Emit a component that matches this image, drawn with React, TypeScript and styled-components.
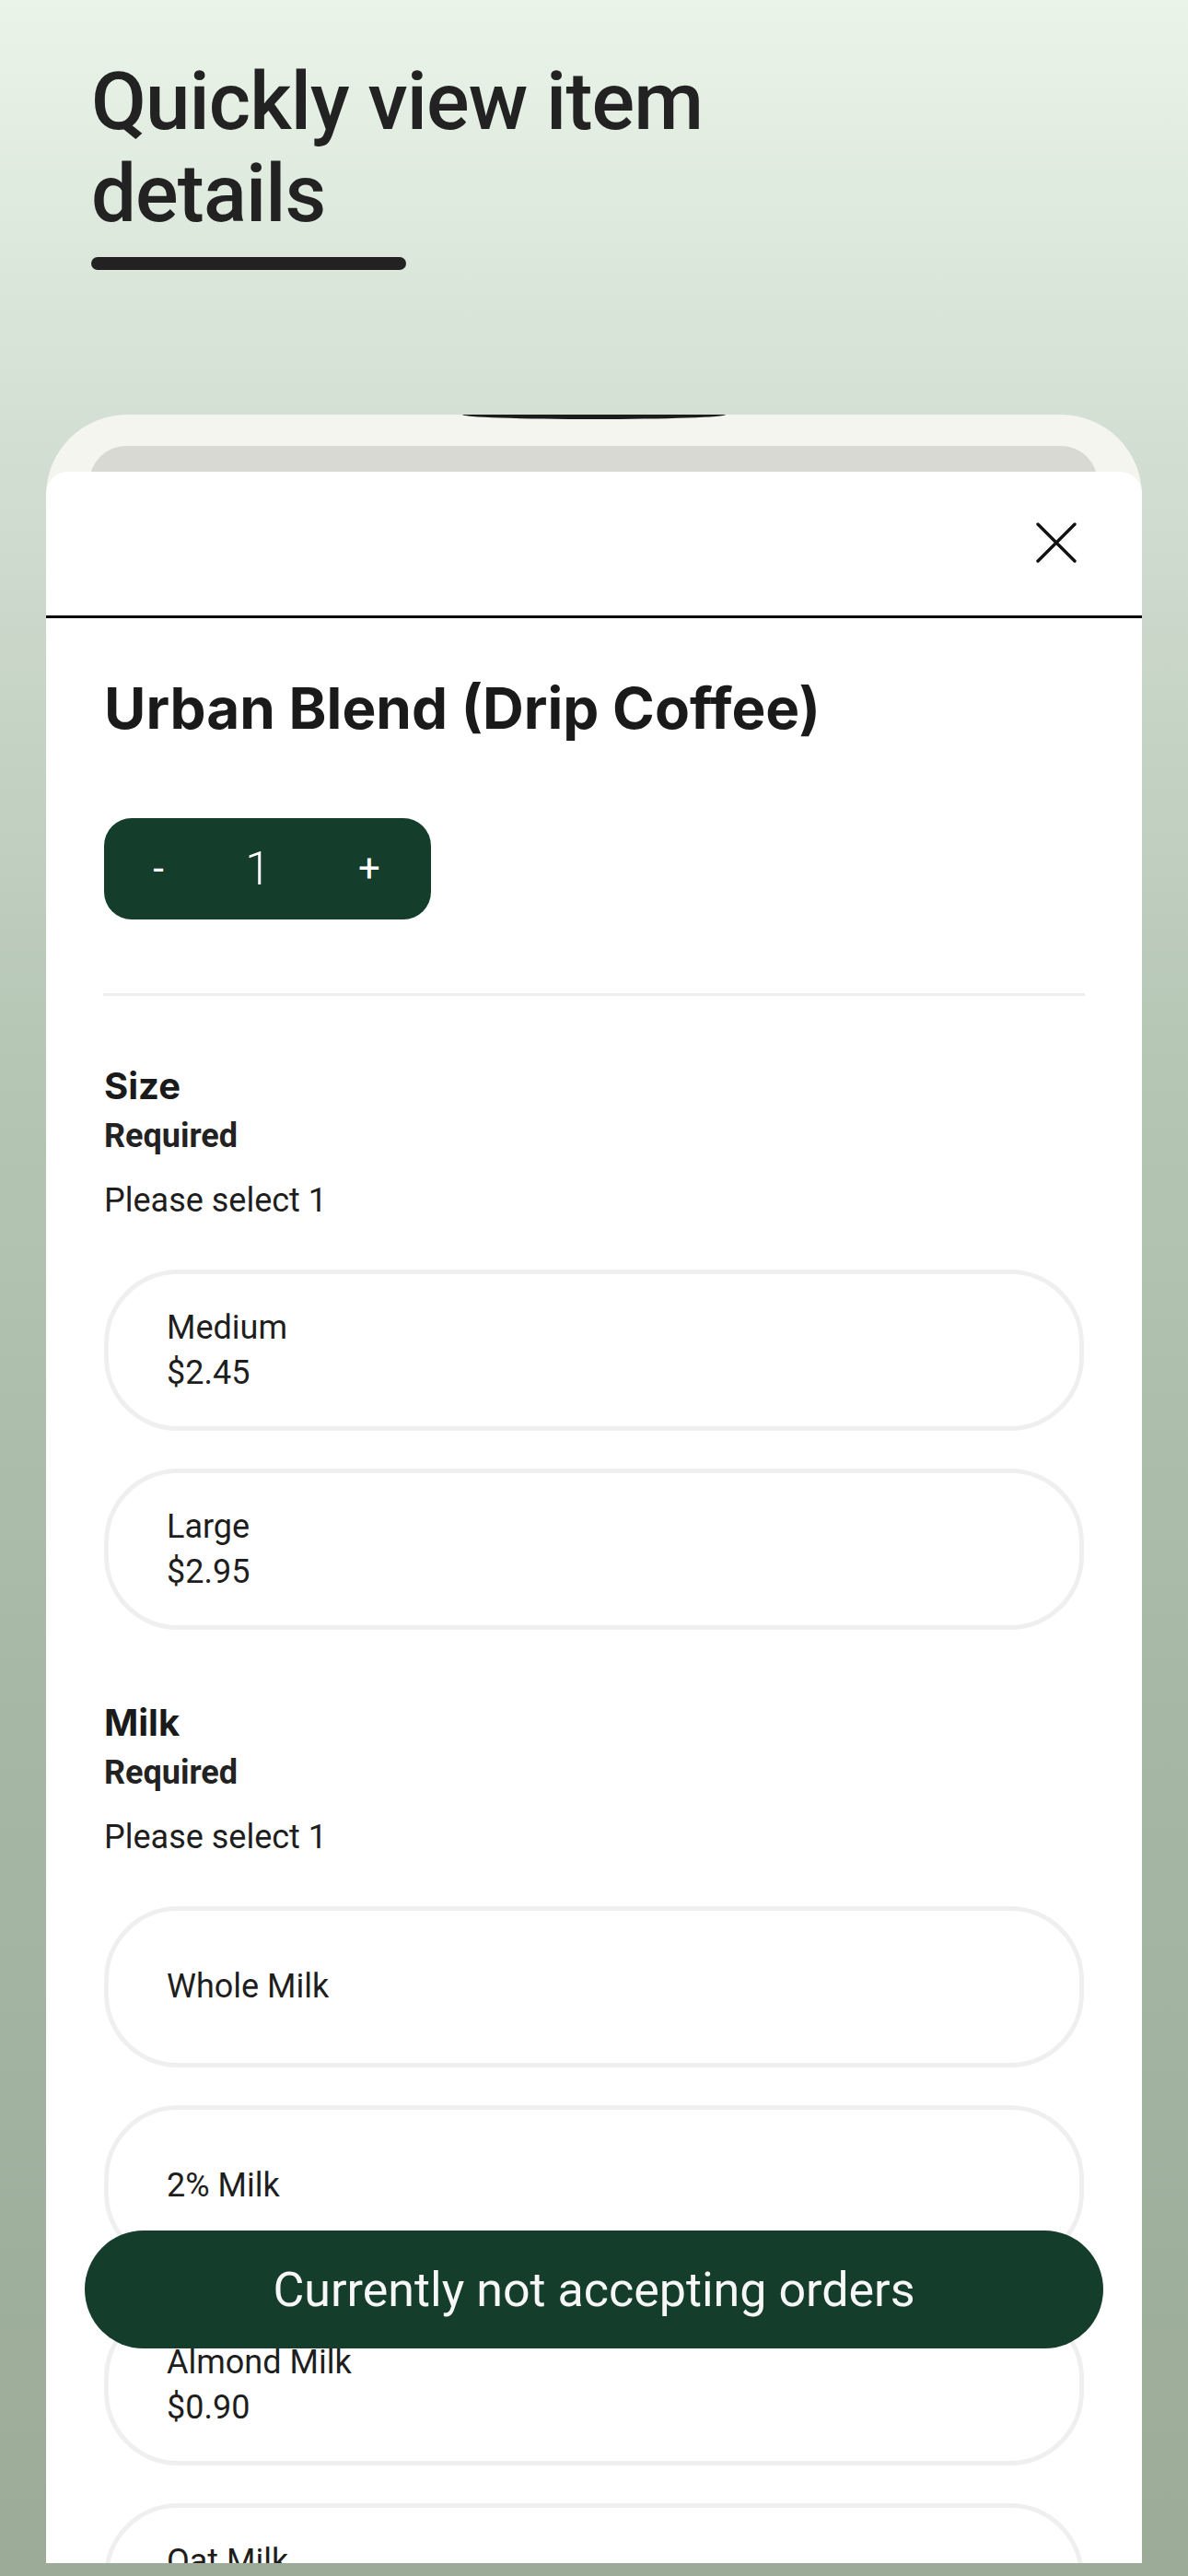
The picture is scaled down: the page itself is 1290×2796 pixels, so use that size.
import React from "react";
import styled, { createGlobalStyle } from "styled-components";

const GlobalStyle = createGlobalStyle`
  html, body { margin: 0; padding: 0; }
  body { background: #9BAB98; }
  * { box-sizing: border-box; }
`;

const Page = styled.div`
  width: 1290px;
  height: 2796px;
  overflow: hidden;
  background: linear-gradient(
    180deg,
    #eaf4e9 0%,
    #d4e0d4 16%,
    #b7c7b6 40%,
    #a7b8a6 65%,
    #9bab98 100%
  );
  font-family: Roboto, "Liberation Sans", sans-serif;
  color: #1e1e1e;
`;

const Intro = styled.header`
  padding: 60px 0 0 99px;
`;

const Headline = styled.h1`
  margin: 0;
  max-width: 820px;
  font-family: Roboto, "Liberation Sans", sans-serif;
  font-weight: 500;
  font-size: 87px;
  line-height: 100px;
  letter-spacing: -0.9px;
  color: #222;
`;

const Underline = styled.div`
  width: 342px;
  height: 14px;
  margin-top: 19px;
  border-radius: 7px;
  background: #222;
`;

const Phone = styled.section`
  position: relative;
  width: 1190px;
  height: 2332px;
  margin: 157px 0 0 50px;
  display: flex;
  flex-direction: column;
`;

const Bezel = styled.div`
  position: relative;
  flex-shrink: 0;
  height: 102px;
  padding: 34px 48px 0 47px;
  background: #f5f5f0;
  border-radius: 88px 88px 0 0;
`;

const Notch = styled.div`
  position: absolute;
  top: 0;
  left: 452px;
  width: 286px;
  height: 5px;
  background: #1c1c1c;
  border-radius: 0 0 143px 143px / 0 0 5px 5px;
`;

const Tray = styled.div`
  height: 68px;
  background: #d9d9d4;
  border-radius: 40px 40px 0 0;
`;

const Sheet = styled.div`
  position: relative;
  flex: 1;
  margin-top: -40px;
  background: #fff;
  border-radius: 24px 24px 0 0;
  overflow: hidden;
  display: flex;
  flex-direction: column;
`;

const SheetHeader = styled.div`
  flex-shrink: 0;
  height: 159px;
  display: flex;
  justify-content: flex-end;
  align-items: center;
  padding: 0 71px 3px 0;
  border-bottom: 3px solid #000;
`;

const CloseButton = styled.button`
  width: 44px;
  height: 44px;
  padding: 0;
  border: none;
  background: none;
  display: flex;
  cursor: pointer;
`;

const Body = styled.div`
  padding: 62px 63px 0;
`;

const Title = styled.h2`
  margin: 0;
  font-family: Inter, "Liberation Sans", sans-serif;
  font-weight: 700;
  font-size: 62px;
  line-height: 72px;
  color: #1a1a1a;
`;

const Stepper = styled.div`
  display: grid;
  grid-template-columns: 118px 98px 139px;
  align-items: center;
  width: 355px;
  height: 110px;
  margin-top: 83px;
  border-radius: 30px;
  background: #143d2c;
  color: #fff;
`;

const StepButton = styled.button<{ $nudge?: number }>`
  padding: 0 0 0 ${(p) => p.$nudge ?? 0}px;
  border: none;
  background: none;
  color: #fff;
  font-family: Roboto, "Liberation Sans", sans-serif;
  font-weight: 400;
  font-size: 42px;
  line-height: 110px;
  text-align: center;
  cursor: pointer;
`;

const Count = styled.span`
  font-family: Roboto, "Liberation Sans", sans-serif;
  font-weight: 300;
  font-size: 50px;
  line-height: 110px;
  text-align: center;
`;

const Divider = styled.hr`
  width: 1066px;
  height: 3px;
  margin: 80px 0 0 -1px;
  border: 0;
  background: #eeeeee;
`;

const Section = styled.section<{ $first?: boolean }>`
  padding-top: ${(p) => (p.$first ? 75 : 78)}px;
`;

const SectionTitle = styled.h3`
  margin: 0;
  font-family: Inter, "Liberation Sans", sans-serif;
  font-weight: 700;
  font-size: 40px;
  line-height: 46px;
  color: #1a1a1a;
`;

const Required = styled.div`
  margin-top: 10px;
  font-weight: 700;
  font-size: 36px;
  line-height: 42px;
  color: #222;
`;

const Hint = styled.p`
  margin: 28px 0 0;
  font-weight: 400;
  font-size: 36px;
  line-height: 42px;
  color: #1e1e1e;
`;

const OptionList = styled.div`
  margin-top: 54px;
  display: flex;
  flex-direction: column;
  gap: 41px;
`;

const OptionCard = styled.div`
  height: 175px;
  padding-left: 63px;
  display: flex;
  flex-direction: column;
  justify-content: center;
  border: 5px solid #efefef;
  border-radius: 80px;
  font-size: 36px;
  line-height: 49px;
  color: #1e1e1e;
`;

const OrderButton = styled.button`
  position: absolute;
  z-index: 2;
  left: 42px;
  right: 42px;
  top: 1971px;
  height: 128px;
  border: none;
  border-radius: 64px;
  background: #143d2c;
  color: #f7f7f7;
  font-family: Roboto, "Liberation Sans", sans-serif;
  font-weight: 400;
  font-size: 52px;
  cursor: pointer;
`;

type Option = { name: string; price?: string };

const sections: { title: string; options: Option[] }[] = [
  {
    title: "Size",
    options: [
      { name: "Medium", price: "$2.45" },
      { name: "Large", price: "$2.95" },
    ],
  },
  {
    title: "Milk",
    options: [
      { name: "Whole Milk" },
      { name: "2% Milk" },
      { name: "Almond Milk", price: "$0.90" },
      { name: "Oat Milk", price: "$0.90" },
    ],
  },
];

const CloseIcon = () => (
  <svg width="44" height="44" viewBox="0 0 44 44" fill="none">
    <path
      d="M2 2 L42 42 M42 2 L2 42"
      stroke="#111"
      strokeWidth="3.4"
      strokeLinecap="round"
    />
  </svg>
);

export default function App() {
  return (
    <>
      <GlobalStyle />
      <Page>
        <Intro>
          <Headline>Quickly view item details</Headline>
          <Underline />
        </Intro>
        <Phone>
          <Bezel>
            <Notch />
            <Tray />
          </Bezel>
          <Sheet>
            <SheetHeader>
              <CloseButton aria-label="Close">
                <CloseIcon />
              </CloseButton>
            </SheetHeader>
            <Body>
              <Title>Urban Blend (Drip Coffee)</Title>
              <Stepper>
                <StepButton>-</StepButton>
                <Count>1</Count>
                <StepButton $nudge={5}>+</StepButton>
              </Stepper>
              <Divider />
              {sections.map((s, i) => (
                <Section key={s.title} $first={i === 0}>
                  <SectionTitle>{s.title}</SectionTitle>
                  <Required>Required</Required>
                  <Hint>Please select 1</Hint>
                  <OptionList>
                    {s.options.map((o) => (
                      <OptionCard key={o.name}>
                        <span>{o.name}</span>
                        {o.price && <span>{o.price}</span>}
                      </OptionCard>
                    ))}
                  </OptionList>
                </Section>
              ))}
            </Body>
          </Sheet>
          <OrderButton>Currently not accepting orders</OrderButton>
        </Phone>
      </Page>
    </>
  );
}
